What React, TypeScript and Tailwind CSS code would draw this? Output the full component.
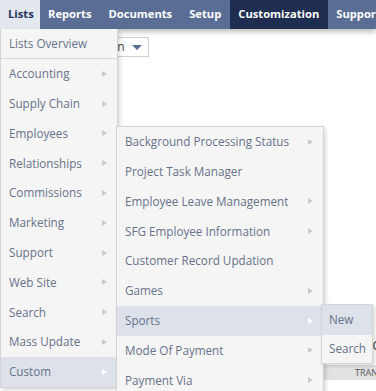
import { ReactNode } from "react";

type Item = { label: string; sub?: boolean; active?: boolean };

const tabs = [
  { label: "Lists", kind: "open" },
  { label: "Reports", kind: "" },
  { label: "Documents", kind: "" },
  { label: "Setup", kind: "" },
  { label: "Customization", kind: "current" },
  { label: "Support", kind: "" },
];

const listsMenu: Item[] = [
  { label: "Accounting", sub: true },
  { label: "Supply Chain", sub: true },
  { label: "Employees", sub: true },
  { label: "Relationships", sub: true },
  { label: "Commissions", sub: true },
  { label: "Marketing", sub: true },
  { label: "Support", sub: true },
  { label: "Web Site", sub: true },
  { label: "Search", sub: true },
  { label: "Mass Update", sub: true },
  { label: "Custom", sub: true, active: true },
];

const customMenu: Item[] = [
  { label: "Background Processing Status", sub: true },
  { label: "Project Task Manager" },
  { label: "Employee Leave Management", sub: true },
  { label: "SFG Employee Information", sub: true },
  { label: "Customer Record Updation" },
  { label: "Games", sub: true },
  { label: "Sports", sub: true, active: true },
  { label: "Mode Of Payment", sub: true },
  { label: "Payment Via", sub: true },
];

const Arrow = ({ active }: { active?: boolean }) => (
  <span
    className={`ml-auto border-y-[3px] border-l-[5px] border-y-transparent ${
      active ? "border-l-white" : "border-l-[#cacaca]"
    }`}
  />
);

const Row = ({ item, children }: { item: Item; children?: ReactNode }) => (
  <div
    className={`flex h-[29.8px] items-center pl-2 pr-[10px] ${
      item.active ? "bg-[#dce1ea]" : ""
    }`}
  >
    <span className="whitespace-nowrap">{item.label}</span>
    {item.sub && <Arrow active={item.active} />}
    {children}
  </div>
);

const App = () => {
  return (
    <div className="relative h-[391px] w-[376px] overflow-hidden bg-white font-['Open_Sans',sans-serif] text-[11.7px] text-[#67728a]">
      <nav className="relative z-10 flex h-[29px] bg-[#5a6d95] text-[11.2px] font-bold text-white shadow-[0_3px_5px_rgba(0,0,0,0.25)]">
        {tabs.map((t) => (
          <div
            key={t.label}
            className={`flex items-center whitespace-nowrap pl-2 pr-[9px] ${
              t.kind === "open"
                ? "w-[40px] bg-[#e3e7ee] text-[#24345a]"
                : t.kind === "current"
                ? "bg-[#1e2d50]"
                : ""
            }`}
          >
            {t.label}
          </div>
        ))}
      </nav>

      {/* page behind the menus */}
      <div className="pt-2">
        <div className="ml-[117px] flex h-[20px] w-[32px] items-center gap-[7px] overflow-hidden border border-l-0 border-[#cfcfcf] text-[12px] text-[#444]">
          <span className="-ml-[7px]">on</span>
          <span className="border-x-[5px] border-t-[5px] border-x-transparent border-t-[#5a6d95]" />
        </div>
        <div className="mt-[280px] flex justify-end text-[12px] text-[#333]">
          <span className="-mr-[4px]">C</span>
        </div>
        <div className="mt-[10px] flex h-[15px] items-center bg-[#e2e2e2] pl-[355px] text-[9px] text-[#555]">
          TRAN
        </div>
      </div>

      {/* Lists menu */}
      <div className="absolute left-0 top-[29px] z-20 w-[118px] border border-t-0 border-[#d4d4d4] bg-[#f5f5f5] shadow-[2px_2px_4px_rgba(0,0,0,0.15)]">
        <div className="flex h-[30px] items-center border-b border-[#d8d8d8] pl-2">
          Lists Overview
        </div>
        <div>
          {listsMenu.map((it) => (
            <Row key={it.label} item={it} />
          ))}
        </div>
      </div>

      {/* Custom menu */}
      <div className="absolute left-[116px] top-[126px] z-30 w-[208px] border border-[#d4d4d4] bg-[#f5f5f5] shadow-[2px_2px_4px_rgba(0,0,0,0.15)]">
        {customMenu.map((it) => (
          <Row key={it.label} item={it} />
        ))}
      </div>

      {/* Sports menu */}
      <div className="absolute left-[321px] top-[304px] z-40 w-[52px] border border-[#d4d4d4] bg-[#f5f5f5] shadow-[2px_2px_4px_rgba(0,0,0,0.15)]">
        <div className="flex h-[30px] items-center bg-[#dce1ea] pl-[7px]">New</div>
        <div className="flex h-[28px] items-center pl-[7px]">Search</div>
      </div>
    </div>
  );
};

export default App;
